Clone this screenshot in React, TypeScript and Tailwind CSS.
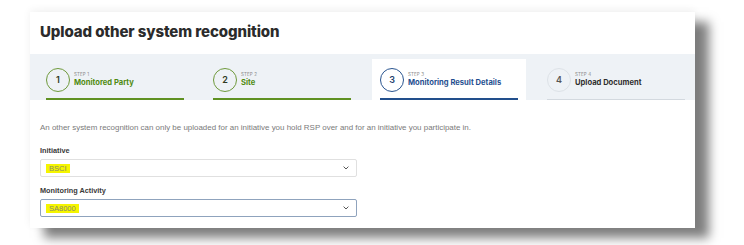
import React from "react";

type Step = {
  n: number;
  title: string;
  state: "done" | "active" | "todo";
};

const steps: Step[] = [
  { n: 1, title: "Monitored Party", state: "done" },
  { n: 2, title: "Site", state: "done" },
  { n: 3, title: "Monitoring Result Details", state: "active" },
  { n: 4, title: "Upload Document", state: "todo" },
];

function StepCell({ step }: { step: Step }) {
  const circle =
    step.state === "done"
      ? "border-[#6f9a3c] text-[#2f3a22]"
      : step.state === "active"
        ? "border-[#2a5590] text-[#1f3f6e]"
        : "border-[#dde2e7] text-[#555]";
  const title =
    step.state === "done"
      ? "text-[#4f8a10]"
      : step.state === "active"
        ? "text-[#1f4f8f]"
        : "text-[#2e2e2e]";
  const bar =
    step.state === "done"
      ? "h-[2px] bg-[#5f9122]"
      : step.state === "active"
        ? "h-[2px] bg-[#224f8c]"
        : "h-[1px] bg-[#d3d9df]";

  return (
    <div
      className={
        "flex h-[41px] w-[154px] flex-col px-[8px] pt-[9px] " +
        (step.state === "active" ? "bg-white" : "")
      }
    >
      <div className="flex items-center gap-[4px]">
        <div
          className={
            "flex h-[24px] w-[24px] items-center justify-center rounded-full border text-[9px] font-semibold " +
            circle
          }
        >
          {step.n}
        </div>
        <div className="flex flex-col leading-none">
          <span className="text-[4.5px] tracking-wide text-[#8a8a8a]">STEP {step.n}</span>
          <span className={"mt-[2px] text-[7.6px] font-bold " + title}>{step.title}</span>
        </div>
      </div>
      <div className={"mt-auto " + bar} />
    </div>
  );
}

function Select({ value, focused }: { value: string; focused?: boolean }) {
  return (
    <div
      className={
        "flex h-[18px] w-[317px] items-center justify-between rounded-[2px] border bg-white pl-[5px] pr-[7px] " +
        (focused ? "border-[#8fa3bd]" : "border-[#e0e0e0]")
      }
    >
      <span className="bg-[#f5f500] px-[3px] text-[7.5px] leading-[9px] text-[#8a8a6a]">{value}</span>
      <svg width="6" height="4" viewBox="0 0 6 4" fill="none">
        <path d="M0.6 0.6 L3 3 L5.4 0.6" stroke="#444" strokeWidth="0.9" />
      </svg>
    </div>
  );
}

export default function App() {
  return (
    <div className="h-[245px] w-[744px] overflow-hidden bg-white pl-[30px] pt-[12px]">
      <div
        className="flex h-[216px] w-[665px] flex-col bg-white shadow-[14px_10px_10px_rgba(0,0,0,0.5),0_-2px_8px_rgba(0,0,0,0.06)]"
        style={{ fontFamily: "Inter, 'Noto Sans', sans-serif" }}
      >
        {/* Title */}
        <div className="flex h-[42px] items-center px-[10px] pb-[2px]">
          <h1 className="text-[15px] font-extrabold tracking-[-0.1px] text-[#2b2b2b]">
            Upload other system recognition
          </h1>
        </div>

        {/* Stepper */}
        <div className="flex h-[46px] gap-[13px] bg-[#eef2f6] pl-[8px] pt-[5px]">
          {steps.map((s) => (
            <StepCell key={s.n} step={s} />
          ))}
        </div>

        {/* Form */}
        <div
          className="flex flex-col px-[10px]"
          style={{ fontFamily: "'Liberation Sans', Arial, sans-serif" }}
        >
          <p className="mt-[23px] text-[7.95px] leading-[10px] text-[#7a7a7a]">
            An other system recognition can only be uploaded for an initiative you hold RSP over and for an initiative you participate in.
          </p>
          <label className="mt-[13px] text-[7.3px] font-semibold leading-[10px] text-[#3a3a3a]">Initiative</label>
          <div className="mt-[3px]">
            <Select value="BSCI" />
          </div>
          <label className="mt-[9px] text-[7.3px] font-semibold leading-[10px] text-[#3a3a3a]">Monitoring Activity</label>
          <div className="mt-[3px]">
            <Select value="SA8000" focused />
          </div>
        </div>
      </div>
    </div>
  );
}
